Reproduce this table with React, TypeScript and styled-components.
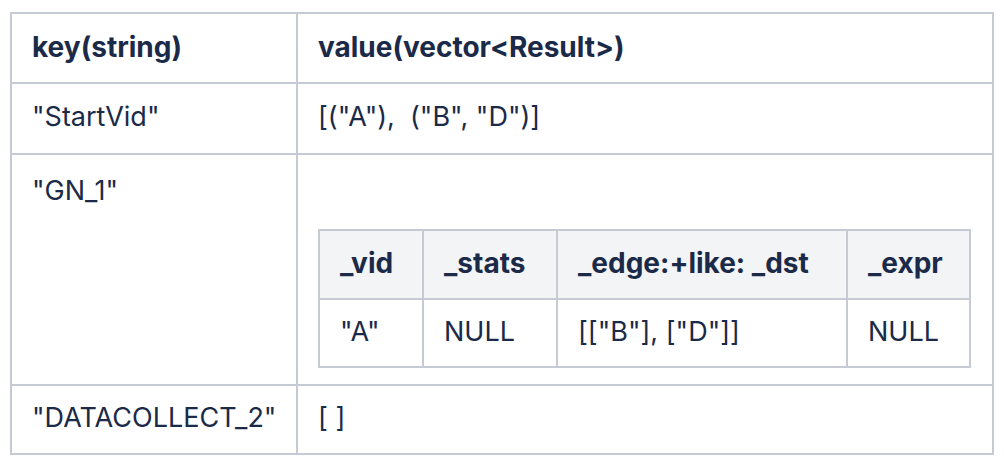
import React from "react";
import styled, { createGlobalStyle } from "styled-components";

const Global = createGlobalStyle`
  html, body { margin: 0; padding: 0; background: #ffffff; }
  body { font-family: Inter, "Noto Sans", sans-serif; color: #1b2a48; }
`;

const Page = styled.div`
  padding: 12px 10px;
`;

const Table = styled.table<{ $width: number }>`
  border-collapse: separate;
  border-spacing: 0;
  table-layout: fixed;
  width: ${(p) => p.$width}px;
  border-left: 2px solid #c5cad4;
  border-top: 2px solid #c5cad4;
`;

const Cell = styled.td<{ $w?: number; $head?: boolean; $bg?: string; $pt?: number; $pb?: number; $h?: number }>`
  box-sizing: border-box;
  ${(p) => (p.$w ? `width: ${p.$w}px;` : "")}
  ${(p) => (p.$h ? `height: ${p.$h}px;` : "")}
  border-right: 2px solid #c5cad4;
  border-bottom: 2px solid #c5cad4;
  padding: ${(p) => p.$pt ?? 0}px 20px ${(p) => p.$pb ?? 3}px 20px;
  vertical-align: ${(p) => (p.$pt !== undefined ? "top" : "middle")};
  font-size: ${(p) => (p.$head ? 28 : 27)}px;
  line-height: 34px;
  font-weight: ${(p) => (p.$head ? 700 : 400)};
  background: ${(p) => p.$bg ?? "#ffffff"};
  color: #1b2a48;
  white-space: nowrap;
  text-align: left;
`;

const innerCols = [104, 134, 290, 123];
const innerHead = ["_vid", "_stats", "_edge:+like: _dst", "_expr"];
const innerBody = ['"A"', "NULL", '[["B"], ["D"]]', "NULL"];

const Inner = () => (
  <Table $width={653}>
    <tbody>
      <tr>
        {innerHead.map((t, i) => (
          <Cell key={t} as="th" $w={innerCols[i]} $head $bg="#f3f4f6" $h={69}>
            {t}
          </Cell>
        ))}
      </tr>
      <tr>
        {innerBody.map((t, i) => (
          <Cell key={i} $w={innerCols[i]} $h={68}>
            {t}
          </Cell>
        ))}
      </tr>
    </tbody>
  </Table>
);

export default function App() {
  return (
    <>
      <Global />
      <Page>
        <Table $width={984}>
          <tbody>
            <tr>
              <Cell as="th" $w={286} $head $h={70}>key(string)</Cell>
              <Cell as="th" $w={696} $head $h={70}>value(vector&lt;Result&gt;)</Cell>
            </tr>
            <tr>
              <Cell $h={71}>"StartVid"</Cell>
              <Cell $h={71}>[("A"),&nbsp; ("B", "D")]</Cell>
            </tr>
            <tr>
              <Cell $pt={19} $pb={0}>"GN_1"</Cell>
              <Cell $pt={74} $pb={16}>
                <Inner />
              </Cell>
            </tr>
            <tr>
              <Cell $h={69}>"DATACOLLECT_2"</Cell>
              <Cell $h={69}>[ ]</Cell>
            </tr>
          </tbody>
        </Table>
      </Page>
    </>
  );
}
